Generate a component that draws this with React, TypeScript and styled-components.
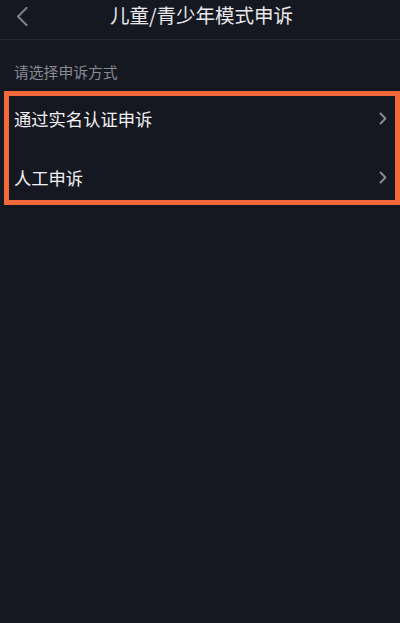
import React from "react";
import styled, { createGlobalStyle } from "styled-components";

const Global = createGlobalStyle`
  html, body { margin: 0; padding: 0; background: #161821; }
  body { font-family: "Noto Sans CJK SC", "Noto Sans", sans-serif; }
`;

const Page = styled.div`
  width: 400px;
  height: 623px;
  background: #161821;
  display: flex;
  flex-direction: column;
  overflow: hidden;
`;

const Header = styled.div`
  height: 39px;
  border-bottom: 1px solid #262934;
  display: grid;
  grid-template-columns: 60px 1fr 60px;
  align-items: start;
`;

const Back = styled.div`
  padding: 7px 0 0 16px;
  display: flex;
`;

const Title = styled.div`
  text-align: center;
  font-size: 19.5px;
  line-height: 20px;
  padding-top: 5px;
  color: #e9e9ec;
  padding-left: 3px;
`;

const Section = styled.div`
  font-size: 14.8px;
  line-height: 16px;
  color: #878a93;
  padding: 24px 0 0 14px;
`;

const Highlight = styled.div`
  margin: 11px 0 0 4px;
  border: 5px solid #f4693a;
  display: flex;
  flex-direction: column;
  gap: 14px;
`;

const Row = styled.div`
  height: 45px;
  display: flex;
  align-items: center;
  justify-content: space-between;
  padding: 0 8px 0 5px;
`;

const Label = styled.span`
  font-size: 17.3px;
  color: #f2f2f4;
  line-height: 18px;
`;

const Chevron = () => (
  <svg width="8" height="13" viewBox="0 0 8 13">
    <path d="M1.5 1.5 L6.5 6.5 L1.5 11.5" fill="none" stroke="#8a8c95" strokeWidth="1.9" strokeLinecap="round" strokeLinejoin="round" />
  </svg>
);

const BackIcon = () => (
  <svg width="12" height="19" viewBox="0 0 12 19">
    <path d="M10.5 1 L2 9.5 L10.5 18" fill="none" stroke="#7f828c" strokeWidth="2" strokeLinecap="round" strokeLinejoin="round" />
  </svg>
);

export default function App() {
  return (
    <Page>
      <Global />
      <Header>
        <Back><BackIcon /></Back>
        <Title>儿童/青少年模式申诉</Title>
        <div />
      </Header>
      <Section>请选择申诉方式</Section>
      <Highlight>
        <Row>
          <Label>通过实名认证申诉</Label>
          <Chevron />
        </Row>
        <Row>
          <Label>人工申诉</Label>
          <Chevron />
        </Row>
      </Highlight>
    </Page>
  );
}
